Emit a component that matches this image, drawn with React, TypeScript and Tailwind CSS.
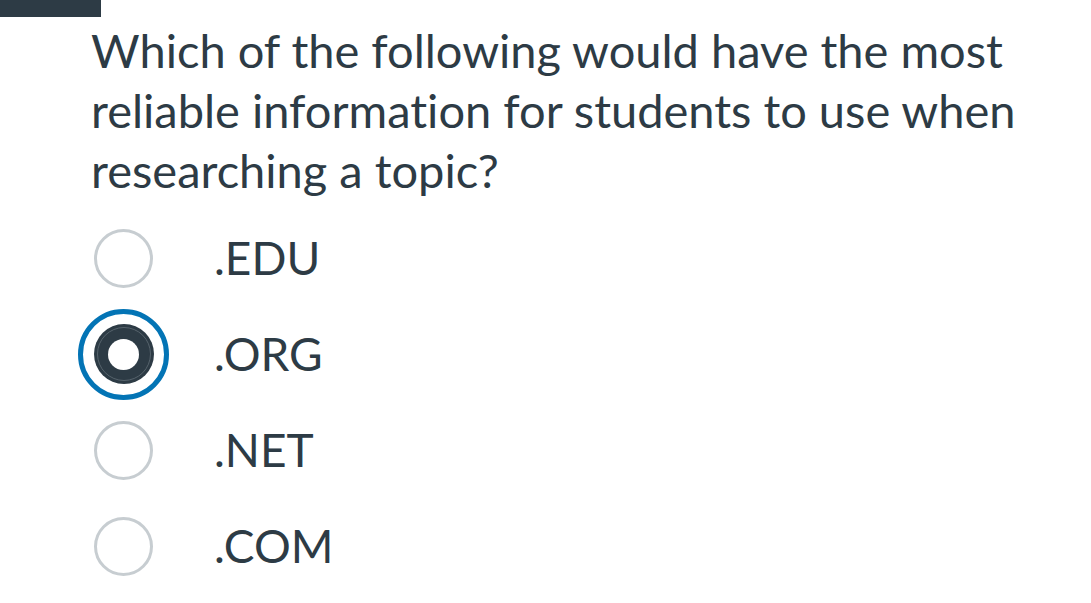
import React from "react";

const options = [".EDU", ".ORG", ".NET", ".COM"];
const selected = 1;

function Radio({ checked }: { checked: boolean }) {
  if (checked) {
    return (
      <div className="shrink-0 w-[91px] h-[91px] rounded-full border-[5px] border-[#0374b5] flex items-center justify-center bg-white">
        <div className="shrink-0 w-[60px] h-[60px] rounded-full bg-[#2d3b45] flex items-center justify-center">
          <div className="shrink-0 w-[54px] h-[54px] rounded-full border border-[#56636c] flex items-center justify-center">
            <div className="shrink-0 w-[31px] h-[31px] rounded-full bg-white" />
          </div>
        </div>
      </div>
    );
  }
  return <div className="shrink-0 w-[59px] h-[59px] rounded-full border-[3px] border-[#c7cdd1] bg-white" />;
}

export default function App() {
  return (
    <div
      className="w-[1091px] h-[603px] bg-white relative overflow-hidden [font-variant-ligatures:none]"
      style={{ fontFamily: "Lato, 'Noto Sans', sans-serif" }}
    >
      <div className="absolute left-0 top-0 w-[101px] h-[17px] bg-[#2d3b45]" />
      <div className="pl-[91px] pt-[20px]">
        <p className="w-[960px] text-[47px] leading-[60px] text-[#2d3b45]">
          Which of the following would have the most reliable information for students to use when researching a topic?
        </p>
        <div className="mt-[10px] flex flex-col">
          {options.map((o, i) => (
            <div key={o} className="h-[96px] flex items-center">
              <div className="shrink-0 w-[65px] flex justify-center">
                <Radio checked={i === selected} />
              </div>
              <span className="ml-[58px] text-[46px] leading-[96px] text-[#2d3b45]">{o}</span>
            </div>
          ))}
        </div>
      </div>
    </div>
  );
}
